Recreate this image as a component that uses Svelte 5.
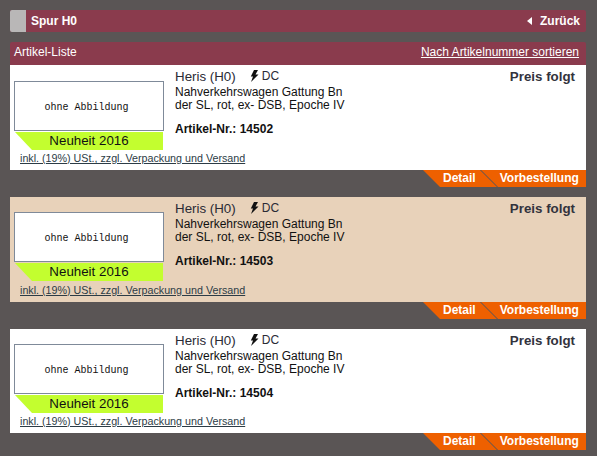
<script>
  const items = [
    { nr: '14502', alt: false },
    { nr: '14503', alt: true },
    { nr: '14504', alt: false }
  ];
</script>

<div class="page">
  <header class="topbar">
    <span class="square"></span>
    <span class="title">Spur H0</span>
    <a class="back" href="#top"><span class="tri"></span>Zurück</a>
  </header>

  <section class="list">
    <div class="listhead">
      <span>Artikel-Liste</span>
      <a href="#sort">Nach Artikelnummer sortieren</a>
    </div>

    {#each items as item}
      <article class="item">
        <div class="card" class:alt={item.alt}>
          <div class="left">
            <div class="photo"><span>ohne Abbildung</span></div>
            <div class="badge">Neuheit 2016</div>
            <a class="tax" href="#tax">inkl. (19%) USt., zzgl. Verpackung und Versand</a>
          </div>
          <div class="info">
            <div class="name">
              <span>Heris (H0)</span>
              <svg class="bolt" width="9" height="12" viewBox="0 0 9 12" aria-hidden="true">
                <path d="M4 0 H8 L5.5 4.5 H8.5 L1 12 L3 6.5 H0.8 Z" fill="#111" />
              </svg>
              <span>DC</span>
            </div>
            <p class="desc">Nahverkehrswagen Gattung Bn<br />der SL, rot, ex- DSB, Epoche IV</p>
            <p class="nr">Artikel-Nr.: {item.nr}</p>
          </div>
          <div class="price">Preis folgt</div>
        </div>
        <div class="actions">
          <div class="btns">
            <a href="#detail" class="detail">Detail</a>
            <a href="#order" class="order">Vorbestellung</a>
            <svg class="sep" width="18" height="17" viewBox="0 0 18 17" aria-hidden="true">
              <line x1="0.5" y1="0" x2="17.5" y2="17" stroke="#4a5560" stroke-width="1" />
            </svg>
          </div>
        </div>
      </article>
    {/each}
  </section>
</div>

<style>
  :global(body) {
    margin: 0;
    background: #5a5555;
  }
  .page {
    width: 597px;
    height: 456px;
    box-sizing: border-box;
    padding: 10px 11px 0 10px;
    overflow: hidden;
    background: #5a5555;
    font-family: "Liberation Sans", Arial, sans-serif;
    color: #111;
  }
  a {
    color: inherit;
  }
  .topbar {
    height: 22px;
    display: flex;
    align-items: center;
    background: #8a3b4d;
    color: #fff;
    border-radius: 2px;
    font-weight: bold;
    font-size: 12px;
  }
  .square {
    width: 16px;
    height: 22px;
    background: #b9b7b7;
    border-radius: 2px 0 0 2px;
  }
  .title {
    margin-left: 5px;
  }
  .back {
    margin-left: auto;
    margin-right: 6px;
    display: flex;
    align-items: center;
    text-decoration: none;
  }
  .tri {
    width: 0;
    height: 0;
    border-style: solid;
    border-width: 4px 5px 4px 0;
    border-color: transparent #fff transparent transparent;
    margin-right: 8px;
  }
  .list {
    margin-top: 10px;
  }
  .listhead {
    height: 23px;
    box-sizing: border-box;
    padding: 0 7px 3px 4px;
    display: flex;
    align-items: center;
    justify-content: space-between;
    background: #8a3b4d;
    border-radius: 2px 2px 0 0;
    color: #fff;
    font-size: 12px;
  }
  .item {
    margin-bottom: 10px;
  }
  .card {
    height: 105px;
    box-sizing: border-box;
    display: flex;
    background: #fff;
    padding-left: 4px;
  }
  .item:last-child .card {
    height: 104px;
  }
  .card.alt {
    background: #e8d2ba;
  }
  .left {
    width: 150px;
    padding-top: 15px;
    flex: none;
    display: flex;
    flex-direction: column;
  }
  .item:first-of-type .left {
    padding-top: 16px;
  }
  .photo {
    box-sizing: border-box;
    width: 150px;
    height: 50px;
    padding-top: 2px;
    display: flex;
    align-items: center;
    justify-content: center;
    background: #fff;
    border: 1px solid #7f8a99;
    font-family: "Liberation Mono", monospace;
    font-size: 10px;
    color: #111;
  }
  .photo span {
    margin-right: 5px;
  }
  .badge {
    width: 148px;
    height: 18px;
    margin: 1px 0 0 1px;
    background: #c3fe2f;
    clip-path: polygon(0 0, 100% 0, 100% 100%, 17px 100%);
    text-align: center;
    font-size: 13.33px;
    line-height: 18px;
    color: #111;
  }
  .tax {
    display: block;
    margin: auto 0 5px 6px;
    font-size: 10.73px;
    line-height: 14px;
    color: #2c3c46;
    white-space: nowrap;
  }
  .info {
    margin-left: 11px;
    padding-top: 3px;
    flex: 1;
    font-size: 12px;
    line-height: 13px;
  }
  .name {
    display: flex;
    align-items: center;
    height: 16px;
    font-size: 13.33px;
    color: #2a2a35;
  }
  .name span:last-child {
    font-size: 12px;
  }
  .bolt {
    margin: 0 3px 0 14px;
  }
  .desc {
    margin: 2px 0 0;
    color: #111;
  }
  .nr {
    margin: 11px 0 0;
    font-weight: bold;
  }
  .price {
    padding: 4px 11px 0 0;
    font-size: 13.33px;
    line-height: 16px;
    font-weight: bold;
    color: #33333d;
    white-space: nowrap;
  }
  .actions {
    height: 17px;
    display: flex;
    justify-content: flex-end;
  }
  .btns {
    position: relative;
    width: 163px;
    height: 17px;
    display: flex;
    background: #ee6000;
    clip-path: polygon(0 0, 100% 0, 100% 100%, 17px 100%);
    color: #fff;
    font-size: 12px;
    font-weight: bold;
    line-height: 17px;
  }
  .btns a {
    text-decoration: none;
  }
  .detail {
    margin-left: 20px;
  }
  .order {
    margin-left: 24px;
  }
  .sep {
    position: absolute;
    left: 57px;
    top: 0;
  }
</style>
